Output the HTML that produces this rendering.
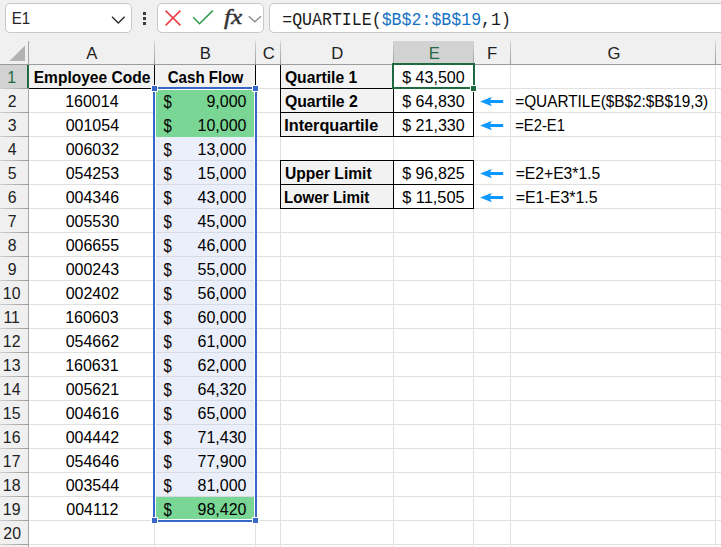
<!DOCTYPE html>
<html><head><meta charset="utf-8"><title>Excel</title>
<style>
html,body{margin:0;padding:0}
body{width:721px;height:547px;overflow:hidden;position:relative;background:#fff;font-family:"Liberation Sans",sans-serif}
#s{position:absolute;left:0;top:0;width:721px;height:547px;overflow:hidden}
#s>div,#s>svg,#s>span{position:absolute;display:block}
#s>span{white-space:pre;transform-origin:0 0}
</style></head><body><div id="s">
<div style="left:0px;top:0px;width:721px;height:65px;background:#f0f0f0;"></div>
<div style="left:0px;top:65px;width:29px;height:482px;background:#f0f0f0;"></div>
<div style="left:29px;top:65px;width:692px;height:482px;background:#ffffff;"></div>
<div style="left:5px;top:3px;width:125px;height:28px;background:#fff;border:1px solid #c9c9c9;border-radius:5px"></div>
<div style="left:157px;top:3px;width:105px;height:28px;background:#fff;border:1px solid #c9c9c9;border-radius:5px"></div>
<div style="left:269px;top:3px;width:470px;height:28px;background:#fff;border:1px solid #c9c9c9;border-radius:5px"></div>
<div style="left:394px;top:41px;width:80px;height:23px;background:#d2d2d2;"></div>
<div style="left:0px;top:65px;width:28px;height:23px;background:#d2d2d2;"></div>
<div style="left:0px;top:64px;width:721px;height:1px;background:#9b9b9b;"></div>
<div style="left:28px;top:41px;width:1px;height:506px;background:#a6a6a6;"></div>
<div style="left:154px;top:41px;width:1px;height:23px;background:linear-gradient(#d4d4d4,#9c9c9c);"></div>
<div style="left:255px;top:41px;width:1px;height:23px;background:linear-gradient(#d4d4d4,#9c9c9c);"></div>
<div style="left:280px;top:41px;width:1px;height:23px;background:linear-gradient(#d4d4d4,#9c9c9c);"></div>
<div style="left:393px;top:41px;width:1px;height:23px;background:linear-gradient(#d4d4d4,#9c9c9c);"></div>
<div style="left:473px;top:41px;width:1px;height:23px;background:linear-gradient(#d4d4d4,#9c9c9c);"></div>
<div style="left:510px;top:41px;width:1px;height:23px;background:linear-gradient(#d4d4d4,#9c9c9c);"></div>
<div style="left:715px;top:41px;width:1px;height:23px;background:linear-gradient(#d4d4d4,#9c9c9c);"></div>
<div style="left:0px;top:88px;width:28px;height:1px;background:linear-gradient(to right,#d0d0d0,#9c9c9c);"></div>
<div style="left:0px;top:112px;width:28px;height:1px;background:linear-gradient(to right,#d0d0d0,#9c9c9c);"></div>
<div style="left:0px;top:136px;width:28px;height:1px;background:linear-gradient(to right,#d0d0d0,#9c9c9c);"></div>
<div style="left:0px;top:160px;width:28px;height:1px;background:linear-gradient(to right,#d0d0d0,#9c9c9c);"></div>
<div style="left:0px;top:184px;width:28px;height:1px;background:linear-gradient(to right,#d0d0d0,#9c9c9c);"></div>
<div style="left:0px;top:208px;width:28px;height:1px;background:linear-gradient(to right,#d0d0d0,#9c9c9c);"></div>
<div style="left:0px;top:232px;width:28px;height:1px;background:linear-gradient(to right,#d0d0d0,#9c9c9c);"></div>
<div style="left:0px;top:256px;width:28px;height:1px;background:linear-gradient(to right,#d0d0d0,#9c9c9c);"></div>
<div style="left:0px;top:280px;width:28px;height:1px;background:linear-gradient(to right,#d0d0d0,#9c9c9c);"></div>
<div style="left:0px;top:304px;width:28px;height:1px;background:linear-gradient(to right,#d0d0d0,#9c9c9c);"></div>
<div style="left:0px;top:328px;width:28px;height:1px;background:linear-gradient(to right,#d0d0d0,#9c9c9c);"></div>
<div style="left:0px;top:352px;width:28px;height:1px;background:linear-gradient(to right,#d0d0d0,#9c9c9c);"></div>
<div style="left:0px;top:376px;width:28px;height:1px;background:linear-gradient(to right,#d0d0d0,#9c9c9c);"></div>
<div style="left:0px;top:400px;width:28px;height:1px;background:linear-gradient(to right,#d0d0d0,#9c9c9c);"></div>
<div style="left:0px;top:424px;width:28px;height:1px;background:linear-gradient(to right,#d0d0d0,#9c9c9c);"></div>
<div style="left:0px;top:448px;width:28px;height:1px;background:linear-gradient(to right,#d0d0d0,#9c9c9c);"></div>
<div style="left:0px;top:472px;width:28px;height:1px;background:linear-gradient(to right,#d0d0d0,#9c9c9c);"></div>
<div style="left:0px;top:496px;width:28px;height:1px;background:linear-gradient(to right,#d0d0d0,#9c9c9c);"></div>
<div style="left:0px;top:520px;width:28px;height:1px;background:linear-gradient(to right,#d0d0d0,#9c9c9c);"></div>
<div style="left:0px;top:544px;width:28px;height:1px;background:linear-gradient(to right,#d0d0d0,#9c9c9c);"></div>
<div style="left:29px;top:88px;width:692px;height:1px;background:#e1e1e1;"></div>
<div style="left:29px;top:112px;width:692px;height:1px;background:#e1e1e1;"></div>
<div style="left:29px;top:136px;width:692px;height:1px;background:#e1e1e1;"></div>
<div style="left:29px;top:160px;width:692px;height:1px;background:#e1e1e1;"></div>
<div style="left:29px;top:184px;width:692px;height:1px;background:#e1e1e1;"></div>
<div style="left:29px;top:208px;width:692px;height:1px;background:#e1e1e1;"></div>
<div style="left:29px;top:232px;width:692px;height:1px;background:#e1e1e1;"></div>
<div style="left:29px;top:256px;width:692px;height:1px;background:#e1e1e1;"></div>
<div style="left:29px;top:280px;width:692px;height:1px;background:#e1e1e1;"></div>
<div style="left:29px;top:304px;width:692px;height:1px;background:#e1e1e1;"></div>
<div style="left:29px;top:328px;width:692px;height:1px;background:#e1e1e1;"></div>
<div style="left:29px;top:352px;width:692px;height:1px;background:#e1e1e1;"></div>
<div style="left:29px;top:376px;width:692px;height:1px;background:#e1e1e1;"></div>
<div style="left:29px;top:400px;width:692px;height:1px;background:#e1e1e1;"></div>
<div style="left:29px;top:424px;width:692px;height:1px;background:#e1e1e1;"></div>
<div style="left:29px;top:448px;width:692px;height:1px;background:#e1e1e1;"></div>
<div style="left:29px;top:472px;width:692px;height:1px;background:#e1e1e1;"></div>
<div style="left:29px;top:496px;width:692px;height:1px;background:#e1e1e1;"></div>
<div style="left:29px;top:520px;width:692px;height:1px;background:#e1e1e1;"></div>
<div style="left:29px;top:544px;width:692px;height:1px;background:#e1e1e1;"></div>
<div style="left:154px;top:65px;width:1px;height:482px;background:#e1e1e1;"></div>
<div style="left:255px;top:65px;width:1px;height:482px;background:#e1e1e1;"></div>
<div style="left:280px;top:65px;width:1px;height:482px;background:#e1e1e1;"></div>
<div style="left:393px;top:65px;width:1px;height:482px;background:#e1e1e1;"></div>
<div style="left:473px;top:65px;width:1px;height:482px;background:#e1e1e1;"></div>
<div style="left:510px;top:65px;width:1px;height:482px;background:#e1e1e1;"></div>
<div style="left:715px;top:65px;width:1px;height:482px;background:#e1e1e1;"></div>
<svg style="left:9px;top:44px" width="18" height="18" viewBox="0 0 18 18"><path d="M16 1.5 L16 17 L0.5 17 Z" fill="#b3b3b3"/></svg>
<div style="left:29px;top:65px;width:125px;height:23px;background:#f2f2f2;"></div>
<div style="left:155px;top:65px;width:100px;height:23px;background:#f2f2f2;"></div>
<div style="left:281px;top:65px;width:112px;height:23px;background:#f2f2f2;"></div>
<div style="left:281px;top:89px;width:112px;height:23px;background:#f2f2f2;"></div>
<div style="left:281px;top:113px;width:112px;height:23px;background:#f2f2f2;"></div>
<div style="left:281px;top:161px;width:112px;height:23px;background:#f2f2f2;"></div>
<div style="left:281px;top:185px;width:112px;height:23px;background:#f2f2f2;"></div>
<div style="left:156px;top:90px;width:98px;height:429px;background:#ebeffa;"></div>
<div style="left:156px;top:112px;width:98px;height:1px;background:#d6dae4;"></div>
<div style="left:156px;top:136px;width:98px;height:1px;background:#d6dae4;"></div>
<div style="left:156px;top:160px;width:98px;height:1px;background:#d6dae4;"></div>
<div style="left:156px;top:184px;width:98px;height:1px;background:#d6dae4;"></div>
<div style="left:156px;top:208px;width:98px;height:1px;background:#d6dae4;"></div>
<div style="left:156px;top:232px;width:98px;height:1px;background:#d6dae4;"></div>
<div style="left:156px;top:256px;width:98px;height:1px;background:#d6dae4;"></div>
<div style="left:156px;top:280px;width:98px;height:1px;background:#d6dae4;"></div>
<div style="left:156px;top:304px;width:98px;height:1px;background:#d6dae4;"></div>
<div style="left:156px;top:328px;width:98px;height:1px;background:#d6dae4;"></div>
<div style="left:156px;top:352px;width:98px;height:1px;background:#d6dae4;"></div>
<div style="left:156px;top:376px;width:98px;height:1px;background:#d6dae4;"></div>
<div style="left:156px;top:400px;width:98px;height:1px;background:#d6dae4;"></div>
<div style="left:156px;top:424px;width:98px;height:1px;background:#d6dae4;"></div>
<div style="left:156px;top:448px;width:98px;height:1px;background:#d6dae4;"></div>
<div style="left:156px;top:472px;width:98px;height:1px;background:#d6dae4;"></div>
<div style="left:156px;top:496px;width:98px;height:1px;background:#d6dae4;"></div>
<div style="left:156px;top:90px;width:98px;height:47px;background:#7ad694;"></div>
<div style="left:156px;top:497px;width:98px;height:22px;background:#7ad694;"></div>
<div style="left:29px;top:88px;width:226px;height:1px;background:#000;"></div>
<div style="left:154px;top:65px;width:1px;height:24px;background:#000;"></div>
<div style="left:255px;top:65px;width:1px;height:24px;background:#000;"></div>
<div style="left:280px;top:88px;width:194px;height:1px;background:#000;"></div>
<div style="left:280px;top:112px;width:194px;height:1px;background:#000;"></div>
<div style="left:280px;top:136px;width:194px;height:1px;background:#000;"></div>
<div style="left:280px;top:65px;width:1px;height:72px;background:#000;"></div>
<div style="left:393px;top:65px;width:1px;height:72px;background:#000;"></div>
<div style="left:473px;top:65px;width:1px;height:72px;background:#000;"></div>
<div style="left:280px;top:160px;width:194px;height:1px;background:#000;"></div>
<div style="left:280px;top:184px;width:194px;height:1px;background:#000;"></div>
<div style="left:280px;top:208px;width:194px;height:1px;background:#000;"></div>
<div style="left:280px;top:160px;width:1px;height:49px;background:#000;"></div>
<div style="left:393px;top:160px;width:1px;height:49px;background:#000;"></div>
<div style="left:473px;top:160px;width:1px;height:49px;background:#000;"></div>
<div style="left:27px;top:65px;width:2px;height:23px;background:#1e6b41;"></div>
<div style="left:155px;top:89px;width:100px;height:1px;background:#fff;"></div>
<div style="left:155px;top:519px;width:100px;height:1px;background:#fff;"></div>
<div style="left:155px;top:89px;width:1px;height:431px;background:#fff;"></div>
<div style="left:254px;top:89px;width:1px;height:431px;background:#fff;"></div>
<div style="left:153px;top:87px;width:104px;height:2px;background:#3566c8;"></div>
<div style="left:153px;top:520px;width:104px;height:2px;background:#3566c8;"></div>
<div style="left:153px;top:87px;width:2px;height:435px;background:#3566c8;"></div>
<div style="left:255px;top:87px;width:2px;height:435px;background:#3566c8;"></div>
<div style="left:151px;top:85px;width:7px;height:7px;background:#fff;"></div>
<div style="left:152px;top:86px;width:5px;height:5px;background:#3566c8;"></div>
<div style="left:252px;top:85px;width:7px;height:7px;background:#fff;"></div>
<div style="left:253px;top:86px;width:5px;height:5px;background:#3566c8;"></div>
<div style="left:151px;top:517px;width:7px;height:7px;background:#fff;"></div>
<div style="left:152px;top:518px;width:5px;height:5px;background:#3566c8;"></div>
<div style="left:252px;top:517px;width:7px;height:7px;background:#fff;"></div>
<div style="left:253px;top:518px;width:5px;height:5px;background:#3566c8;"></div>
<div style="left:392px;top:63px;width:83px;height:2px;background:#1e6b41;"></div>
<div style="left:392px;top:87px;width:83px;height:2px;background:#1e6b41;"></div>
<div style="left:392px;top:63px;width:2px;height:26px;background:#1e6b41;"></div>
<div style="left:473px;top:63px;width:2px;height:26px;background:#1e6b41;"></div>
<div style="left:470px;top:85px;width:7px;height:7px;background:#fff;"></div>
<div style="left:471px;top:86px;width:5px;height:5px;background:#1e6b41;"></div>
<div style="left:394px;top:63px;width:80px;height:2px;background:#1e6b41;"></div>
<svg style="left:480px;top:95px" width="25" height="14" viewBox="0 0 25 14"><path d="M0.1 6.6 L11.8 2.0 L10.2 5.1 L23.2 5.1 L23.2 8.1 L10.2 8.1 L11.8 11.2 Z" fill="#0c98ff"/></svg>
<svg style="left:480px;top:119px" width="25" height="14" viewBox="0 0 25 14"><path d="M0.1 6.6 L11.8 2.0 L10.2 5.1 L23.2 5.1 L23.2 8.1 L10.2 8.1 L11.8 11.2 Z" fill="#0c98ff"/></svg>
<svg style="left:480px;top:167px" width="25" height="14" viewBox="0 0 25 14"><path d="M0.1 6.6 L11.8 2.0 L10.2 5.1 L23.2 5.1 L23.2 8.1 L10.2 8.1 L11.8 11.2 Z" fill="#0c98ff"/></svg>
<svg style="left:480px;top:191px" width="25" height="14" viewBox="0 0 25 14"><path d="M0.1 6.6 L11.8 2.0 L10.2 5.1 L23.2 5.1 L23.2 8.1 L10.2 8.1 L11.8 11.2 Z" fill="#0c98ff"/></svg>
<svg style="left:0;top:0" width="270" height="40" viewBox="0 0 270 40" fill="none" stroke-linecap="butt">
<path d="M112 16.8 L118.3 23 L124.6 16.8" stroke="#2b2b2b" stroke-width="1.4"/>
<rect x="143" y="12" width="3" height="3" fill="#3d3d3d"/><rect x="143" y="17" width="3" height="3" fill="#3d3d3d"/><rect x="143" y="22" width="3" height="3" fill="#3d3d3d"/>
<path d="M165.6 10.6 L180.4 25.4 M180.4 10.6 L165.6 25.4" stroke="#ea3e45" stroke-width="1.5"/>
<path d="M193.2 17.3 L199.5 23.7 L212.8 10.6" stroke="#2f9e50" stroke-width="1.6"/>
<path d="M248.7 16.2 L254.8 21.8 L260.9 16.2" stroke="#8c8c8c" stroke-width="1.3"/>
</svg>

<svg style="left:0;top:0" width="721" height="547" viewBox="0 0 721 547" xml:space="preserve">
<text transform="translate(86.20 59.00)" font-family='"Liberation Sans", sans-serif' font-size="16.7" fill="#222">A</text>
<text transform="translate(199.80 59.00)" font-family='"Liberation Sans", sans-serif' font-size="16.7" fill="#222">B</text>
<text transform="translate(262.80 59.00)" font-family='"Liberation Sans", sans-serif' font-size="16.7" fill="#222">C</text>
<text transform="translate(331.30 59.00)" font-family='"Liberation Sans", sans-serif' font-size="16.7" fill="#222">D</text>
<text transform="translate(428.70 59.00)" font-family='"Liberation Sans", sans-serif' font-size="16.7" fill="#1e6b41">E</text>
<text transform="translate(486.90 59.00)" font-family='"Liberation Sans", sans-serif' font-size="16.7" fill="#222">F</text>
<text transform="translate(607.50 59.00)" font-family='"Liberation Sans", sans-serif' font-size="16.7" fill="#222">G</text>
<text transform="translate(7.25 83.00) scale(0.9500 1.0000)" font-family='"Liberation Sans", sans-serif' font-size="16.7" fill="#1e6b41">1</text>
<text transform="translate(7.73 107.00) scale(0.9500 1.0000)" font-family='"Liberation Sans", sans-serif' font-size="16.7" fill="#222">2</text>
<text transform="translate(7.73 131.00) scale(0.9500 1.0000)" font-family='"Liberation Sans", sans-serif' font-size="16.7" fill="#222">3</text>
<text transform="translate(7.73 155.00) scale(0.9500 1.0000)" font-family='"Liberation Sans", sans-serif' font-size="16.7" fill="#222">4</text>
<text transform="translate(7.73 179.00) scale(0.9500 1.0000)" font-family='"Liberation Sans", sans-serif' font-size="16.7" fill="#222">5</text>
<text transform="translate(7.73 203.00) scale(0.9500 1.0000)" font-family='"Liberation Sans", sans-serif' font-size="16.7" fill="#222">6</text>
<text transform="translate(7.73 227.00) scale(0.9500 1.0000)" font-family='"Liberation Sans", sans-serif' font-size="16.7" fill="#222">7</text>
<text transform="translate(7.73 251.00) scale(0.9500 1.0000)" font-family='"Liberation Sans", sans-serif' font-size="16.7" fill="#222">8</text>
<text transform="translate(7.73 275.00) scale(0.9500 1.0000)" font-family='"Liberation Sans", sans-serif' font-size="16.7" fill="#222">9</text>
<text transform="translate(2.84 299.00) scale(0.9500 1.0000)" font-family='"Liberation Sans", sans-serif' font-size="16.7" fill="#222">10</text>
<text transform="translate(3.43 323.00) scale(0.9500 1.0000)" font-family='"Liberation Sans", sans-serif' font-size="16.7" fill="#222">11</text>
<text transform="translate(2.84 347.00) scale(0.9500 1.0000)" font-family='"Liberation Sans", sans-serif' font-size="16.7" fill="#222">12</text>
<text transform="translate(2.84 371.00) scale(0.9500 1.0000)" font-family='"Liberation Sans", sans-serif' font-size="16.7" fill="#222">13</text>
<text transform="translate(2.84 395.00) scale(0.9500 1.0000)" font-family='"Liberation Sans", sans-serif' font-size="16.7" fill="#222">14</text>
<text transform="translate(2.84 419.00) scale(0.9500 1.0000)" font-family='"Liberation Sans", sans-serif' font-size="16.7" fill="#222">15</text>
<text transform="translate(2.84 443.00) scale(0.9500 1.0000)" font-family='"Liberation Sans", sans-serif' font-size="16.7" fill="#222">16</text>
<text transform="translate(2.84 467.00) scale(0.9500 1.0000)" font-family='"Liberation Sans", sans-serif' font-size="16.7" fill="#222">17</text>
<text transform="translate(2.84 491.00) scale(0.9500 1.0000)" font-family='"Liberation Sans", sans-serif' font-size="16.7" fill="#222">18</text>
<text transform="translate(2.84 515.00) scale(0.9500 1.0000)" font-family='"Liberation Sans", sans-serif' font-size="16.7" fill="#222">19</text>
<text transform="translate(3.32 539.00) scale(0.9500 1.0000)" font-family='"Liberation Sans", sans-serif' font-size="16.7" fill="#222">20</text>
<text transform="translate(65.15 107.00)" font-family='"Liberation Sans", sans-serif' font-size="16" fill="#000">160014</text>
<text transform="translate(163.50 107.60) scale(0.9300 1.1000)" font-family='"Liberation Sans", sans-serif' font-size="16" fill="#000">$</text>
<text transform="translate(206.46 107.00)" font-family='"Liberation Sans", sans-serif' font-size="16" fill="#000">9,000</text>
<text transform="translate(65.65 131.00)" font-family='"Liberation Sans", sans-serif' font-size="16" fill="#000">001054</text>
<text transform="translate(163.50 131.60) scale(0.9300 1.1000)" font-family='"Liberation Sans", sans-serif' font-size="16" fill="#000">$</text>
<text transform="translate(197.56 131.00)" font-family='"Liberation Sans", sans-serif' font-size="16" fill="#000">10,000</text>
<text transform="translate(65.65 155.00)" font-family='"Liberation Sans", sans-serif' font-size="16" fill="#000">006032</text>
<text transform="translate(163.50 155.60) scale(0.9300 1.1000)" font-family='"Liberation Sans", sans-serif' font-size="16" fill="#000">$</text>
<text transform="translate(197.56 155.00)" font-family='"Liberation Sans", sans-serif' font-size="16" fill="#000">13,000</text>
<text transform="translate(65.65 179.00)" font-family='"Liberation Sans", sans-serif' font-size="16" fill="#000">054253</text>
<text transform="translate(163.50 179.60) scale(0.9300 1.1000)" font-family='"Liberation Sans", sans-serif' font-size="16" fill="#000">$</text>
<text transform="translate(197.56 179.00)" font-family='"Liberation Sans", sans-serif' font-size="16" fill="#000">15,000</text>
<text transform="translate(65.65 203.00)" font-family='"Liberation Sans", sans-serif' font-size="16" fill="#000">004346</text>
<text transform="translate(163.50 203.60) scale(0.9300 1.1000)" font-family='"Liberation Sans", sans-serif' font-size="16" fill="#000">$</text>
<text transform="translate(197.56 203.00)" font-family='"Liberation Sans", sans-serif' font-size="16" fill="#000">43,000</text>
<text transform="translate(65.65 227.00)" font-family='"Liberation Sans", sans-serif' font-size="16" fill="#000">005530</text>
<text transform="translate(163.50 227.60) scale(0.9300 1.1000)" font-family='"Liberation Sans", sans-serif' font-size="16" fill="#000">$</text>
<text transform="translate(197.56 227.00)" font-family='"Liberation Sans", sans-serif' font-size="16" fill="#000">45,000</text>
<text transform="translate(65.65 251.00)" font-family='"Liberation Sans", sans-serif' font-size="16" fill="#000">006655</text>
<text transform="translate(163.50 251.60) scale(0.9300 1.1000)" font-family='"Liberation Sans", sans-serif' font-size="16" fill="#000">$</text>
<text transform="translate(197.56 251.00)" font-family='"Liberation Sans", sans-serif' font-size="16" fill="#000">46,000</text>
<text transform="translate(65.65 275.00)" font-family='"Liberation Sans", sans-serif' font-size="16" fill="#000">000243</text>
<text transform="translate(163.50 275.60) scale(0.9300 1.1000)" font-family='"Liberation Sans", sans-serif' font-size="16" fill="#000">$</text>
<text transform="translate(197.56 275.00)" font-family='"Liberation Sans", sans-serif' font-size="16" fill="#000">55,000</text>
<text transform="translate(65.65 299.00)" font-family='"Liberation Sans", sans-serif' font-size="16" fill="#000">002402</text>
<text transform="translate(163.50 299.60) scale(0.9300 1.1000)" font-family='"Liberation Sans", sans-serif' font-size="16" fill="#000">$</text>
<text transform="translate(197.56 299.00)" font-family='"Liberation Sans", sans-serif' font-size="16" fill="#000">56,000</text>
<text transform="translate(65.15 323.00)" font-family='"Liberation Sans", sans-serif' font-size="16" fill="#000">160603</text>
<text transform="translate(163.50 323.60) scale(0.9300 1.1000)" font-family='"Liberation Sans", sans-serif' font-size="16" fill="#000">$</text>
<text transform="translate(197.56 323.00)" font-family='"Liberation Sans", sans-serif' font-size="16" fill="#000">60,000</text>
<text transform="translate(65.65 347.00)" font-family='"Liberation Sans", sans-serif' font-size="16" fill="#000">054662</text>
<text transform="translate(163.50 347.60) scale(0.9300 1.1000)" font-family='"Liberation Sans", sans-serif' font-size="16" fill="#000">$</text>
<text transform="translate(197.56 347.00)" font-family='"Liberation Sans", sans-serif' font-size="16" fill="#000">61,000</text>
<text transform="translate(65.15 371.00)" font-family='"Liberation Sans", sans-serif' font-size="16" fill="#000">160631</text>
<text transform="translate(163.50 371.60) scale(0.9300 1.1000)" font-family='"Liberation Sans", sans-serif' font-size="16" fill="#000">$</text>
<text transform="translate(197.56 371.00)" font-family='"Liberation Sans", sans-serif' font-size="16" fill="#000">62,000</text>
<text transform="translate(65.65 395.00)" font-family='"Liberation Sans", sans-serif' font-size="16" fill="#000">005621</text>
<text transform="translate(163.50 395.60) scale(0.9300 1.1000)" font-family='"Liberation Sans", sans-serif' font-size="16" fill="#000">$</text>
<text transform="translate(197.56 395.00)" font-family='"Liberation Sans", sans-serif' font-size="16" fill="#000">64,320</text>
<text transform="translate(65.65 419.00)" font-family='"Liberation Sans", sans-serif' font-size="16" fill="#000">004616</text>
<text transform="translate(163.50 419.60) scale(0.9300 1.1000)" font-family='"Liberation Sans", sans-serif' font-size="16" fill="#000">$</text>
<text transform="translate(197.56 419.00)" font-family='"Liberation Sans", sans-serif' font-size="16" fill="#000">65,000</text>
<text transform="translate(65.65 443.00)" font-family='"Liberation Sans", sans-serif' font-size="16" fill="#000">004442</text>
<text transform="translate(163.50 443.60) scale(0.9300 1.1000)" font-family='"Liberation Sans", sans-serif' font-size="16" fill="#000">$</text>
<text transform="translate(197.56 443.00)" font-family='"Liberation Sans", sans-serif' font-size="16" fill="#000">71,430</text>
<text transform="translate(65.65 467.00)" font-family='"Liberation Sans", sans-serif' font-size="16" fill="#000">054646</text>
<text transform="translate(163.50 467.60) scale(0.9300 1.1000)" font-family='"Liberation Sans", sans-serif' font-size="16" fill="#000">$</text>
<text transform="translate(197.56 467.00)" font-family='"Liberation Sans", sans-serif' font-size="16" fill="#000">77,900</text>
<text transform="translate(65.65 491.00)" font-family='"Liberation Sans", sans-serif' font-size="16" fill="#000">003544</text>
<text transform="translate(163.50 491.60) scale(0.9300 1.1000)" font-family='"Liberation Sans", sans-serif' font-size="16" fill="#000">$</text>
<text transform="translate(197.56 491.00)" font-family='"Liberation Sans", sans-serif' font-size="16" fill="#000">81,000</text>
<text transform="translate(66.25 515.00)" font-family='"Liberation Sans", sans-serif' font-size="16" fill="#000">004112</text>
<text transform="translate(163.50 515.60) scale(0.9300 1.1000)" font-family='"Liberation Sans", sans-serif' font-size="16" fill="#000">$</text>
<text transform="translate(197.56 515.00)" font-family='"Liberation Sans", sans-serif' font-size="16" fill="#000">98,420</text>
<text transform="translate(33.73 83.00) scale(0.9720 1.0000)" font-family='"Liberation Sans", sans-serif' font-size="16" fill="#000" font-weight="bold">Employee Code</text>
<text transform="translate(167.70 83.00) scale(0.9434 1.0000)" font-family='"Liberation Sans", sans-serif' font-size="16" fill="#000" font-weight="bold">Cash Flow</text>
<text transform="translate(284.90 83.00) scale(0.9810 1.0000)" font-family='"Liberation Sans", sans-serif' font-size="16" fill="#000" font-weight="bold">Quartile 1</text>
<text transform="translate(284.90 107.00) scale(0.9877 1.0000)" font-family='"Liberation Sans", sans-serif' font-size="16" fill="#000" font-weight="bold">Quartile 2</text>
<text transform="translate(284.18 131.00) scale(1.0179 1.0000)" font-family='"Liberation Sans", sans-serif' font-size="16" fill="#000" font-weight="bold">Interquartile</text>
<text transform="translate(284.90 179.00) scale(0.9770 1.0000)" font-family='"Liberation Sans", sans-serif' font-size="16" fill="#000" font-weight="bold">Upper Limit</text>
<text transform="translate(283.95 203.00) scale(0.9502 1.0000)" font-family='"Liberation Sans", sans-serif' font-size="16" fill="#000" font-weight="bold">Lower Limit</text>
<text transform="translate(402.20 83.00) scale(1.0035 1.0000)" font-family='"Liberation Sans", sans-serif' font-size="16" fill="#000">$ 43,500</text>
<text transform="translate(402.20 107.00) scale(1.0035 1.0000)" font-family='"Liberation Sans", sans-serif' font-size="16" fill="#000">$ 64,830</text>
<text transform="translate(402.20 131.00) scale(1.0035 1.0000)" font-family='"Liberation Sans", sans-serif' font-size="16" fill="#000">$ 21,330</text>
<text transform="translate(402.20 179.00) scale(1.0035 1.0000)" font-family='"Liberation Sans", sans-serif' font-size="16" fill="#000">$ 96,825</text>
<text transform="translate(402.20 203.00) scale(1.0230 1.0000)" font-family='"Liberation Sans", sans-serif' font-size="16" fill="#000">$ 11,505</text>
<text transform="translate(515.20 107.00) scale(0.9596 1.0000)" font-family='"Liberation Sans", sans-serif' font-size="16" fill="#000">=QUARTILE($B$2:$B$19,3)</text>
<text transform="translate(515.20 131.00) scale(0.9237 1.0000)" font-family='"Liberation Sans", sans-serif' font-size="16" fill="#000">=E2-E1</text>
<text transform="translate(515.70 179.00) scale(0.9803 1.0000)" font-family='"Liberation Sans", sans-serif' font-size="16" fill="#000">=E2+E3*1.5</text>
<text transform="translate(515.70 203.00) scale(0.9954 1.0000)" font-family='"Liberation Sans", sans-serif' font-size="16" fill="#000">=E1-E3*1.5</text>
<text transform="translate(11.82 24.00) scale(0.8791 1.0000)" font-family='"Liberation Sans", sans-serif' font-size="17" fill="#222">E1</text>
<text transform="translate(223.90 24.30) scale(1.1770 1.0000)" font-family='"Liberation Serif", serif' font-size="21.5" fill="#333" font-style="italic" stroke="#333" stroke-width="0.45">fx</text>
<text transform="translate(282.20 24.60) scale(1.0050 1.0600)" font-family='"Liberation Mono", monospace' font-size="16.5" fill="#1a1a1a">=QUARTILE(<tspan fill="#1672c4">$B$2:$B$19</tspan>,1)</text>
</svg>
</div></body></html>
